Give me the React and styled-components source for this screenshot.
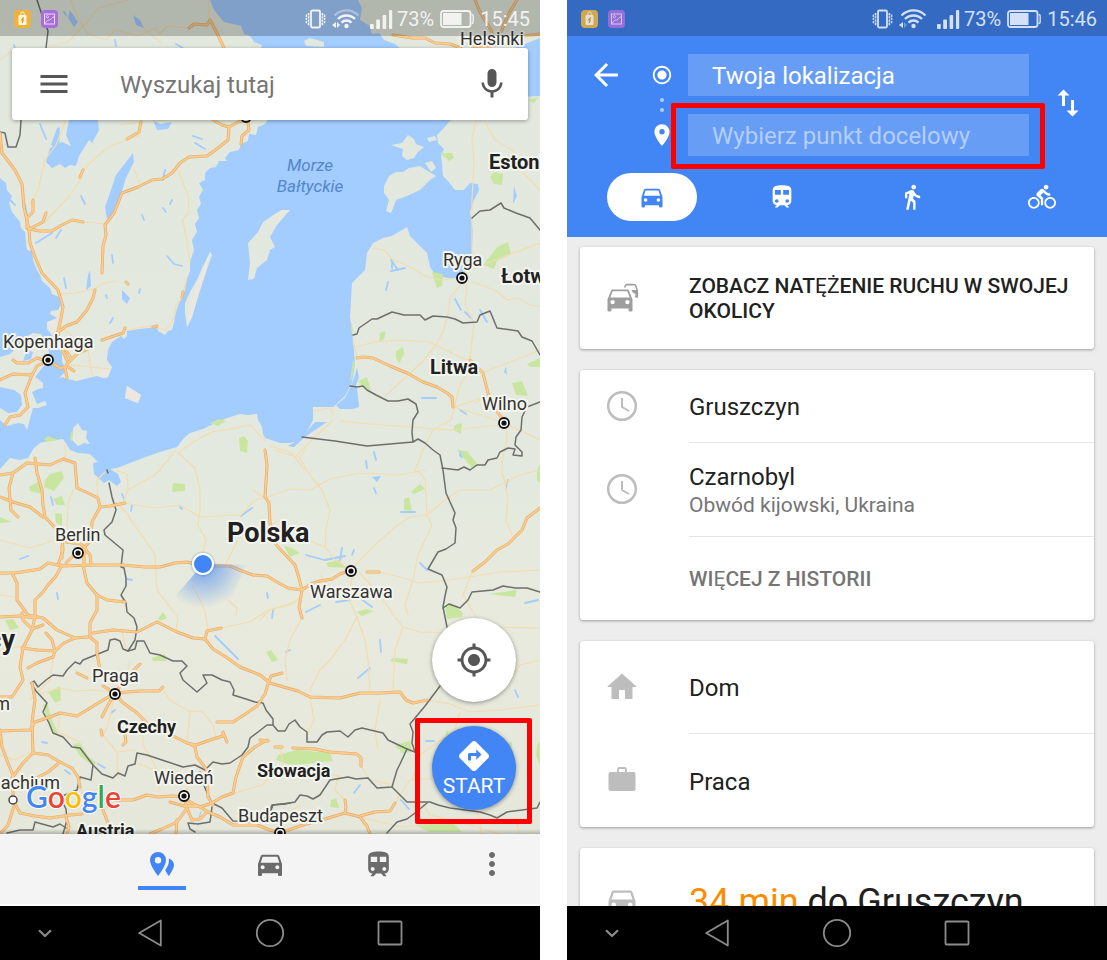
import React from "react";
import styled, { createGlobalStyle, css } from "styled-components";
import {
  MdArrowBack,
  MdDirections,
  MdDirectionsBike,
  MdDirectionsCar,
  MdDirectionsWalk,
  MdHome,
  MdMenu,
  MdMic,
  MdMoreVert,
  MdMyLocation,
  MdPlace,
  MdRadioButtonChecked,
  MdSwapVert,
  MdTrain,
} from "react-icons/md";

const GlobalStyle = createGlobalStyle`
  *, *::before, *::after { box-sizing: border-box; }
  body {
    margin: 0;
    background: #fff;
    color: #212121;
    font-family: Roboto, "Noto Sans", sans-serif;
  }
  button, input { font: inherit; color: inherit; }
  ul { list-style: none; margin: 0; padding: 0; }
  svg { display: block; }
`;

const blue = "#4285f4";

const Page = styled.main`
  display: grid;
  grid-template-columns: minmax(0, 1fr) minmax(0, 1fr);
  gap: 27px;
  height: 100vh;
  min-height: 640px;
`;

const Phone = styled.section`
  display: flex;
  flex-direction: column;
  min-height: 0;
  overflow: hidden;
`;

const PlainButton = styled.button`
  display: flex;
  align-items: center;
  justify-content: center;
  padding: 0;
  border: 0;
  background: none;
  cursor: pointer;
`;

/* ---------- status bar ---------- */

const StatusRow = styled.div`
  position: relative;
  display: flex;
  flex: none;
  align-items: center;
  height: 36px;
  padding: 2px 10px 0 14px;
  background: ${(p) => (p.$over ? "rgba(0, 0, 0, 0.21)" : "#356ac3")};
  color: ${(p) => (p.$over ? "#f2f2f0" : "#d3e0f5")};
  font-size: 20px;
  line-height: 24px;
`;

const Notices = styled.div`
  display: flex;
  gap: 10px;
  margin-right: auto;
  opacity: ${(p) => (p.$faded ? 0.85 : 1)};
`;

const Signals = styled.div`
  display: flex;
  align-items: center;
  gap: 6px;
`;

const Group = styled.div`
  display: flex;
  align-items: center;
  gap: 4px;
  margin-left: 5px;
`;

function StatusBar({ time, over }) {
  return (
    <StatusRow $over={over}>
      <Notices $faded={!over}>
        <svg width="17" height="18" viewBox="0 0 17 18" aria-hidden="true">
          <rect width="17" height="18" rx="4" fill="#edb33c" />
          <rect x="4.5" y="5" width="8" height="10" rx="1" fill="#fff6dc" />
          <path d="M6.8 5.5V3.6a1.7 1.7 0 0 1 3.4 0v1.9" fill="none" stroke="#fff6dc" strokeWidth="1" />
          <path d="M9.8 7.5L7.6 10h1.6l-1 3" fill="none" stroke="#d99a1c" strokeWidth="1.2" />
        </svg>
        <svg width="17" height="18" viewBox="0 0 17 18" aria-hidden="true">
          <rect width="17" height="18" rx="4" fill="#a86fdc" />
          <rect x="3.5" y="4" width="10" height="10" fill="none" stroke="#ecd9fb" strokeWidth="1" />
          <circle cx="6.4" cy="6.8" r="1.2" fill="none" stroke="#ecd9fb" strokeWidth="0.8" />
          <path d="M4 13.5c2-3 3-3.5 4.5-3.5S11 7 13.5 6.5" fill="none" stroke="#ecd9fb" strokeWidth="1" />
        </svg>
      </Notices>
      <Signals>
        <svg width="21" height="20" viewBox="0 0 21 20" fill="none" stroke="currentColor" aria-hidden="true">
          <rect x="6" y="1.5" width="9" height="17" rx="1.2" strokeWidth="1.8" />
          <path d="M3.6 4v13M17.4 4v13" strokeWidth="1.6" strokeDasharray="2.4 0.8" />
          <path d="M1.4 5.5v9.500M19.600 5.500v9.500" strokeWidth="1.4" strokeDasharray="2.4 0.8" />
        </svg>
        <svg width="27" height="20" viewBox="0 0 27 20" fill="none" stroke="currentColor" aria-hidden="true">
          <path d="M2.500 6.500a16.500 16.500 0 0 1 24 0" strokeWidth="2.200" opacity={over ? 0.4 : 1} />
          <path d="M6 10a12 12 0 0 1 17 0" strokeWidth="2.400" />
          <path d="M9.500 13.600a7 7 0 0 1 10 0" strokeWidth="2.400" />
          <circle cx="14.500" cy="17" r="2.200" fill="currentColor" stroke="none" />
          <path d="M4 13v6l-4-3z" fill="currentColor" stroke="none" />
          <path d="M5 13v6l3-3z" fill="currentColor" stroke="none" opacity={over ? 1 : 0.4} />
        </svg>
        <Group>
          <svg width="23" height="19" viewBox="0 0 23 19" fill="currentColor" aria-hidden="true">
            <rect x="0" y="14" width="3.800" height="5" rx="1" />
            <rect x="6.200" y="9.500" width="3.800" height="9.500" rx="1" />
            <rect x="12.600" y="5" width="3.600" height="14" rx="1" />
            <rect x="19" y="0" width="3.200" height="19" rx="1" />
          </svg>
          <span>73%</span>
        </Group>
        <svg width="34" height="18" viewBox="0 0 34 18" aria-hidden="true">
          <rect x="1" y="1" width="29.500" height="16" rx="2.500" fill="none" stroke="currentColor" strokeWidth="1.800" />
          <rect x="3" y="3" width="18.500" height="12" fill="currentColor" />
          <path d="M31.500 4.500c1.400 0 1.700.6 1.700 1.500v6c0 .9-.3 1.500-1.700 1.500" fill="none" stroke="currentColor" strokeWidth="1.400" />
        </svg>
        <span>{time}</span>
      </Signals>
    </StatusRow>
  );
}

/* ---------- system navigation ---------- */

const SystemNav = styled.nav`
  position: relative;
  display: grid;
  flex: none;
  grid-template-columns: 3fr 4fr 4fr 4fr 3fr;
  height: 54px;
  background: #000;
  color: #8c8c8c;
`;

function NavBar() {
  const line = { fill: "none", stroke: "currentColor", strokeWidth: 1.8, strokeLinejoin: "round" };
  return (
    <SystemNav aria-label="System">
      <PlainButton aria-label="Ukryj">
        <svg width="14" height="9" viewBox="0 0 14 9" {...line} strokeWidth="2.200">
          <path d="M1 1.200L7 7l6-5.800" />
        </svg>
      </PlainButton>
      <PlainButton aria-label="Wstecz">
        <svg width="24" height="28" viewBox="0 0 24 28" {...line}>
          <path d="M22.800 1.500v25L1.200 14z" />
        </svg>
      </PlainButton>
      <PlainButton aria-label="Ekran główny">
        <svg width="30" height="30" viewBox="0 0 30 30" {...line}>
          <circle cx="15" cy="15" r="13.200" />
        </svg>
      </PlainButton>
      <PlainButton aria-label="Ostatnie">
        <svg width="26" height="26" viewBox="0 0 26 26" {...line}>
          <rect x="1.500" y="1.500" width="23" height="23" rx="1" />
        </svg>
      </PlainButton>
    </SystemNav>
  );
}

/* ---------- map drawing ---------- */

const LAND = [
  // Sweden
  "0,0 210,0 214,10 224,22 233,24 241,26 244,34 250,36 254,42 262,45 258,60 262,80 270,100 258,112 268,120 265,124 258,127 256,135 249,134 248,141 241,144 239,150 230,152 225,158 227,161 219,161 216,167 210,168 205,173 205,180 199,183 203,190 199,197 201,204 197,210 199,218 195,224 197,232 192,240 194,250 190,262 190,271 186,281 185,291 180,300 176,312 174,322 172,330 168,331 165,335 158,331 157,327 140,329 127,331 127,336 124,339 121,336 112,342 108,350 107,360 112,367 108,377 103,378 97,376 88,378 77,381 66,379 63,377 59,378 64,373 65,367 62,362 62,353 55,343 54,338 47,329 47,322 52,324 56,322 57,318 50,314 51,311 58,310 61,305 59,297 52,294 50,288 42,281 40,275 37,270 33,260 32,251 27,250 26,243 25,232 21,228 20,222 12,212 9,203 12,196 7,190 6,183 0,178",
  // Zealand
  "0,357 10,354 17,347 23,343 27,336 33,333 41,334 46,343 49,352 48,361 43,367 35,377 38,379 43,383 43,388 38,389 32,392 37,404 45,401 47,405 38,408 33,408 27,430 24,424 18,423 7,426 0,420 0,408 8,413 17,412 22,405 21,395 14,390 0,387",
  // continent
  "0,469 10,458 20,460 28,458 34,448 40,443 48,441 63,439 67,445 70,450 78,453 90,454 97,461 104,467 110,469 117,468 143,458 160,452 177,447 184,438 190,433 203,429 217,422 227,418 240,414 248,415 257,414 258,420 262,427 263,434 265,438 280,443 290,443 301,440 307,433 309,428 313,420 313,407 333,407 345,396 352,383 354,370 355,363 353,340 350,317 352,283 357,278 365,270 367,253 373,243 383,238 392,236 407,227 410,236 418,244 427,253 430,267 434,273 443,277 453,279 460,277 468,270 472,263 472,248 473,231 470,212 474,200 479,190 478,184 470,183 464,190 455,190 448,181 443,176 442,163 441,156 444,149 438,143 437,135 444,128 449,122 470,100 500,98 540,96 540,834 0,834",
  // Finland
  "358,0 362,8 360,20 370,26 372,34 379,33 384,40 395,44 402,50 430,56 470,55 500,52 514,48 530,42 540,38 540,0",
  // Gotland, Oland, Bornholm, Rügen
  "290,210 282,210 272,216 263,222 258,232 248,243 250,263 248,280 254,279 257,268 267,260 270,250 275,247 270,237 277,225",
  "210,252 212,255 206,272 200,287 197,300 192,317 187,327 185,313 185,303 191,290 197,280 203,266",
  "127,386 141,395 138,403 125,398",
  "73,428 78,423 82,430 87,431 86,438 90,444 84,443 78,446 72,440",
  // Saaremaa, Hiiumaa and neighbours
  "384,186 389,176 396,172 403,172 409,168 420,166 426,170 436,176 430,180 420,190 407,196 396,200 393,208 391,213 386,211 389,200 384,193",
  "391,145 402,143 408,135 414,139 416,144 424,147 418,152 414,158 407,160 402,156 403,149",
  "425,163 432,161 436,168 431,172",
  "427,138 435,136 437,140 429,142",
  "304,41 310,38 317,40 324,42 324,47 306,46",
];

const PALE = [
  "290,210 282,210 272,216 277,222",
  "210,252 206,272 197,300 192,317 187,327 190,306 198,282",
  "127,386 141,395 138,403 125,398",
  "47,322 57,318 56,333 49,329",
  "97,376 104,368 112,367 107,378",
];

const WATER = [
  // Vänern and Vättern
  "69,120 98,120 99,130 92,143 89,140 79,156 76,166 70,165 65,168 60,164 52,168 46,162 50,148 62,142 71,146 66,135",
  "133,153 134,162 126,178 121,194 114,212 107,219 105,207 109,196 116,175 123,166",
  // lagoons
  "93,463 101,461 107,467 118,474 121,482 117,486 109,480 104,483 94,474",
  "352,384 357,388 359,407 353,409 340,409 336,405 345,398",
  "303,437 309,429 315,422 327,422 318,428 306,436 294,447 288,446",
  "352,384 357,368 359,377 355,388",
  "51,145 57,128 60,127 59,150",
  "153,120 160,124 172,122 168,129 157,130",
  "133,15 140,20 144,28 136,25",
  "70,10 78,22 74,27 68,18",
  "90,270 91,286 86,290 88,275",
  "122,290 130,298 127,304 122,299",
  "372,477 381,476 377,482",
  "196,832 200,812 202,811 199,820",
  "27,350 33,352 31,359 23,361",
  "504,372 506,366 507,375",
  "514,186 517,196 513,204",
  "460,450 463,459 459,456",
];

const BROOKS = [
  "14,45 16,52", "25,60 28,66", "40,124 46,139", "81,196 85,204", "142,215 144,220", "165,170 163,180",
  "163,208 166,212", "172,200 170,204", "193,136 202,139", "195,143 205,149", "115,40 116,46", "64,12 66,15",
  "167,256 174,264 182,266", "112,255 113,263", "64,278 66,288", "110,323 113,318", "140,289 139,293",
  "106,295 107,298", "36,243 52,233", "56,238 61,230", "176,44 183,48", "10,200 15,205", "25,205 27,215",
  "391,260 398,270", "392,263 392,268", "386,290 388,282", "391,271 405,268", "455,299 461,310", "465,312 471,318",
  "422,398 436,398", "460,410 466,414", "374,452 376,460", "132,505 131,511", "122,494 124,499", "180,507 182,509",
  "241,516 252,508", "267,593 268,598", "57,593 58,599", "20,559 28,556", "51,497 53,505", "127,579 132,580",
  "215,636 238,659", "272,618 273,610", "306,555 324,560", "325,560 345,556", "354,550 352,555", "306,612 320,605",
  "336,602 350,600", "360,598 372,607", "380,640 381,652", "358,678 370,668", "401,512 415,512", "508,480 506,488",
  "538,600 525,603", "515,690 518,697", "286,652 290,650", "426,741 434,741", "401,800 409,809", "354,793 360,785",
  "340,560 342,548", "420,563 427,570", "98,764 105,768", "65,770 70,774", "42,742 47,743", "111,713 115,710",
  "202,570 204,576", "366,461 367,468", "374,488 376,493", "480,310 487,322",
];

const PARKS = [
  "45,480 50,474 62,471 64,478 54,491 44,487", "29,487 38,482 44,492 38,493 30,491",
  "53,499 62,496 65,505 57,505", "55,513 62,514 62,526 56,523", "0,517 12,522 0,523",
  "173,483 185,484 185,491 172,492", "239,438 244,436 248,441 247,453 240,451", "210,423 219,419 226,421 218,426",
  "71,431 73,434 72,441 70,440", "44,439 48,436 58,440 47,442", "158,619 163,612 167,618 160,621",
  "266,652 271,650 278,660 272,662", "152,658 165,654 166,661 153,661", "48,692 60,686 61,700 55,703",
  "43,705 47,703 53,722 58,733 54,735 48,722", "73,744 80,743 88,756 97,763 92,765 80,756", "5,620 13,619 19,628 10,630",
  "326,563 339,560 347,568 328,567", "284,546 290,547 300,553 290,557", "357,612 366,609 374,611 362,616",
  "404,499 409,497 412,511 404,510", "411,492 420,484 425,489 414,494", "445,605 451,603 463,613 462,617 447,619",
  "489,594 517,590 515,597", "457,450 467,451 478,465 472,468", "393,658 408,659 407,664 390,661",
  "278,755 297,750 330,753 333,761 305,764 290,765 276,760", "395,745 410,741 412,752 402,753",
  "512,383 522,381 528,396 516,395", "455,425 462,423 461,434 453,430", "380,333 386,331 384,339 379,342",
  "396,351 403,347 404,354 399,364 396,358", "483,265 497,247 508,242 511,254 497,261 494,269", "432,272 443,274 442,286 437,288",
  "358,381 367,377 371,391 361,385", "353,360 355,362 352,378 350,382", "527,364 540,358 540,367 530,367",
  "440,153 452,153 454,158 449,161 445,157", "490,177 494,172 503,174 502,185 494,184", "351,321 354,334 351,331",
  "331,800 336,798 339,808 330,807", "500,745 512,742 511,760 505,757", "415,825 450,820 462,832 430,832", "528,100 539,97 534,103",
  "447,730 456,742 442,745", "537,745 540,742 540,765 536,755", "537,470 540,464 540,483 537,480",
];

const HIGHWAYS = [
  "0,133 2,153 15,170 22,184 24,207 29,230 30,243 35,257 42,273 58,290 63,307 61,318 58,332 60,345 68,362 65,368 67,378",
  "29,229 40,231 52,231 62,225 72,220 83,222",
  "213,120 222,125 229,127 238,122 246,120",
  "229,127 228,140 218,148 207,156 189,157 180,163 172,173 162,179 152,180 138,187 122,193 114,213 105,225 106,235 103,246 102,273",
  "248,122 249,130 242,136 241,144",
  "141,122 139,132 127,139",
  "33,200 33,212 27,218 27,228",
  "46,213 43,222 29,229",
  "189,28 194,24 207,25 210,20 217,33 224,48",
  "95,290 93,298 87,310 77,322 66,326 57,333",
  "393,35 412,38 425,38 435,43 450,44 461,48",
  "475,0 480,12 491,30 496,45", "517,0 508,15 501,32 496,45", "524,36 540,34", "472,46 490,48",
  "102,340 108,338 123,333 125,328", "153,327 157,326", "126,282 128,284", "80,177 83,170", "182,297 183,292",
  "67,364 78,353 90,348", "62,345 71,358", "68,367 74,371",
  "0,380 13,374 32,375 37,366 47,361", "32,375 25,393 28,407 20,415 10,417 5,425", "13,360 17,363 28,363 37,358 46,361", "52,363 60,368 66,367",
  "357,358 363,357 373,358 390,366 407,373 423,382 437,387 447,393 452,397 453,407",
  "470,360 483,373 488,393 492,404 503,420",
  "0,475 13,473 27,463 50,465 63,459 75,463 77,488 88,493 98,498 100,507 110,506 125,503",
  "100,507 92,522 91,540 84,548", "35,458 37,473 42,490 43,505 45,517 62,535 63,550 58,565",
  "0,497 13,502 30,507 43,517", "13,473 9,488 11,510 18,517",
  "66,542 81,544 90,555 91,564", "62,546 62,558", "84,550 84,566", "66,563 77,552",
  "0,573 15,573 40,569 48,563 63,566 93,565 123,565 145,567 160,567 175,563 187,562 203,566 230,566 242,571 253,575 267,576 277,582 288,588 302,590 311,584 320,581 332,579 340,574 351,570",
  "367,572 379,572",
  "265,450 267,465 265,497 269,503 270,523 272,538 278,547 295,565 299,578 302,590 299,607 302,618",
  "62,565 56,576 48,585 43,592 35,600 35,617 32,630 23,648 20,667 23,680 12,697 0,697",
  "83,565 87,583 97,595 107,600 125,602", "97,594 97,610 90,623 90,637 97,643 97,653 100,670",
  "12,573 17,583 17,600 28,615 43,618 57,630 75,638 88,637", "0,617 20,616 35,618",
  "22,613 23,620 32,629 43,625", "93,633 113,630 137,632 157,622 177,632 193,638 205,639 213,649 226,657 240,667 260,675 270,683 287,688 298,691 310,697 340,698 360,693 380,693 400,692 406,700 413,703 427,700",
  "205,639 207,631 221,628", "217,722 233,722 247,713 257,706 265,694 268,684 271,676 282,673",
  "22,648 37,650 55,651 64,643 75,638", "46,633 52,640 55,651 53,657 37,663 28,668",
  "115,693 100,702 77,716 60,713 50,717 35,722 30,730 0,731", "115,693 140,691 159,691 163,687", "115,693 127,677 140,664", "115,693 103,686", "115,693 108,705 102,717",
  "115,693 122,702 137,713 147,723 165,732 187,743 196,745 213,739 223,736 223,732 227,742",
  "190,744 195,747 197,757 207,770 208,797 213,805", "77,673 87,678", "101,730 102,735", "125,735 126,742 123,745",
  "32,683 35,700 32,722 33,753 23,763 12,778 11,788", "0,730 2,747 8,763 13,775 13,800 20,813 35,816 50,818 70,815 82,814",
  "33,753 48,755 60,762 72,768 78,777 80,787", "60,762 48,772 35,779 25,783", "66,817 69,827 67,834", "14,806 8,825 0,834",
  "117,800 133,800 147,795 158,797 173,796 183,797 192,803 200,807 208,812 220,817 233,825 257,825 270,830 280,833",
  "184,797 187,808 180,818 175,823 162,829 150,834", "200,807 212,803 222,797 233,793 236,777 243,757 255,747 267,740",
  "170,802 184,806 198,806", "187,808 192,820 200,819 207,812", "103,810 108,823 110,834", "177,820 176,834",
  "275,747 282,747", "293,748 315,749 330,752 357,754 361,758 361,766", "260,740 268,741",
  "280,833 303,825 325,819 345,813 360,817 367,826 370,834", "345,813 346,807 345,800", "360,816 375,812 390,811 395,803",
  "540,508 527,518 522,530 517,535 508,544 497,550 485,562 473,571",
];

const ROADS = [
  "71,0 78,18 88,34 106,40 115,30 139,36 155,28 160,34 167,26 189,28", "145,30 161,43", "208,0 210,20", "129,0 98,8 88,21 68,42 50,46",
  "0,60 12,51", "66,120 56,145 45,160 38,190 30,205", "141,135 110,146 95,158 83,170 80,180 70,195 45,222",
  "172,120 140,122 120,125", "134,170 140,183", "178,170 188,195 189,212 182,220 186,235 190,262", "83,222 105,224",
  "60,294 75,293 95,289 102,284 116,281", "126,330 150,326 166,330 174,318 176,305 182,298 187,278", "60,325 75,340 88,350 92,375", "70,365 110,369",
  "476,120 472,140 474,160 472,200 472,263", "485,122 495,140 512,150 520,170 540,190",
  "373,248 384,250 393,260 410,267 425,276 443,280 458,278 468,271 500,258 540,243", "472,282 495,290 507,300 518,298 530,305 540,306",
  "460,285 450,298 449,308 444,330 436,345 423,361 405,378 385,396", "355,347 375,342 400,340 430,342 445,350 463,358 470,361", "467,284 465,305 474,323 472,340 470,358",
  "472,365 460,385 455,405 451,420 433,430 425,445 415,470", "484,372 510,362 540,350", "455,407 490,395 475,403", "453,407 480,415 504,423 540,440", "506,425 507,440 502,460 502,475 508,485",
  "340,421 370,424 410,427 450,430 500,425", "332,421 315,437 296,456", "270,446 290,452 305,470", "314,411 330,408 334,415", "353,340 357,358",
  "117,470 127,474 128,490 123,503 155,508 180,505 200,517 240,515", "119,505 128,515 132,522 144,538 155,555 156,577 157,590 167,603 178,618 176,630", "176,450 168,460 155,475 128,490",
  "178,453 195,468 200,490 200,510 198,525 206,540 200,562", "178,453 195,441 212,432 225,430 250,425 265,440", "240,516 255,500 265,498 290,489 310,490 330,479 360,473 400,475 425,470",
  "275,450 300,458 312,478 322,490 330,510 326,530 325,547", "300,457 305,450", "418,470 425,480 427,515 432,525 418,555 413,580 405,605 408,615",
  "353,567 375,545 395,527 410,517 427,515 445,500 460,490 490,490 520,475 540,470", "379,572 400,577 420,583 450,580 500,572 540,570", "300,537 325,547 335,560 348,568", "262,530 280,520",
  "503,475 508,500 506,520 512,535", "472,572 463,595 478,620 480,640", "238,540 225,565 210,562", "192,585 200,600 205,612 208,630", "221,628 250,622 268,610 290,605 300,598",
  "302,618 290,640 285,660 287,680", "260,620 270,610 295,602", "340,600 320,575", "353,575 348,598 357,617 345,640 330,660 320,670 310,690", "357,617 365,640 368,660 370,690",
  "360,573 380,595 395,617 403,627 420,632 445,633", "403,627 395,650 393,690", "310,697 314,720 307,735", "380,700 375,730 378,750",
  "427,700 450,704 470,712 500,710 540,705", "440,686 470,700 500,690 520,665 540,660", "480,627 540,628", "460,712 455,730 420,755 412,780",
  "163,690 170,700 190,712 187,743", "190,711 203,712 213,725 216,738", "125,678 130,663", "115,693 95,690 75,691 60,688 40,694", "115,693 108,725 103,735 117,752 118,778",
  "143,723 143,745 155,765 160,790", "117,752 135,750", "137,763 155,770 180,772", "183,796 195,775 205,770", "60,713 58,732 80,742", "30,645 0,650", "54,652 50,680 30,700",
  "0,595 15,597", "67,533 68,504 73,490", "122,630 125,645 128,650", "0,755 15,760 30,752", "80,787 85,800 103,810", "103,810 117,800",
  "280,745 283,765 262,785 235,793", "282,765 305,770 340,776", "361,766 370,780 395,785", "345,800 335,790 338,776", "395,803 410,780 440,778", "282,833 285,815 300,805", "420,800 430,815 470,825 500,834", "475,800 482,834", "360,817 400,827 430,825", "515,818 520,834",
  "60,464 66,455 65,445", "98,500 97,480 105,472", "228,600 237,608 236,615", "0,540 30,548 55,540", "253,490 268,500",
];

const BORDERS = [
  "37,0 43,18 48,31 46,48", "21,120 20,135 16,147 8,147 5,133 0,132",
  "107,470 108,473", "109,483 112,497 116,510 112,522 104,530 105,535 123,550 121,567 124,568 126,578 126,586 121,595 126,603 127,612 134,618 137,627 135,640 128,651 123,649 120,641 115,639 110,640 108,650 98,654 83,660 80,664 75,662 67,670 63,676 53,675 46,680 38,687 34,681 31,683 36,691 47,703 43,712 49,723 53,733 63,737 72,747 80,748 93,765 102,774 113,778 118,773 125,776 128,766 135,764 137,753 147,755 165,761 183,767 195,765 205,770 213,762 222,764 230,763 242,755 248,747 250,738 258,732 267,725 273,725 278,731 285,731 289,724 295,720 300,727 307,732 307,742 317,742 322,735 327,732 340,731 348,737 355,730 362,728 383,733 388,740 407,749 415,752",
  "128,651 135,649 137,641 144,641 150,653 160,655 173,661 182,661 187,666 180,673 183,680 197,692 207,683 203,675 212,675 222,680 230,682 234,690 233,695 246,699 255,702 263,703 266,710 273,719 273,725",
  "440,686 425,706 410,724 413,732 412,743 415,752",
  "447,627 443,607 445,596 447,587 442,575 428,569 438,552 446,549 455,543 456,528 453,520 455,513 446,493 443,470 440,455 433,450 425,443 418,439 413,442 412,432 413,420 418,412 416,404 408,399 398,401 388,401 376,395 367,390 363,386 357,387 350,386",
  "302,437 335,441 367,446 413,442",
  "353,335 357,334 359,328 372,319 377,319 392,312 404,315 420,315 425,320 433,316 447,317 455,319 463,323 477,322 480,315 490,311 497,328 518,331 522,337 532,341 540,355",
  "472,218 480,211 490,210 501,203 504,208 516,213 530,218 540,230",
  "540,402 527,407 522,417 521,430 516,437 515,445 522,452 522,456 513,455 515,449 508,448 500,452 497,458 488,460 485,465 477,465 470,470 464,467 458,470 442,468",
  "443,608 449,604 460,608 468,600 472,592 493,590 503,586 515,588 527,588 540,592",
  "270,813 273,805 285,804 295,802 300,795 307,796 313,799 320,795 330,780 348,777 356,779 368,778 377,788 392,787 397,770 400,764 407,749",
  "392,787 400,795 407,802 430,802 438,805 450,808 465,810 480,812 490,815 497,818 507,812 522,810 537,808 540,802",
  "387,833 397,822 407,819 415,813 427,803",
  "200,772 203,783 208,795 212,803 222,808 233,821 260,822 268,815 272,805 290,803", "212,807 210,822 198,824 188,823 190,829 195,832",
  "93,765 91,780 80,777 77,790 60,797 66,809 67,820 63,834", "7,833 20,830 33,830 35,822 53,827 60,824 66,828",
];

const MARKERS = [
  [48, 360], [246, 117], [462, 278], [504, 423], [78, 553], [351, 571], [115, 694], [184, 796], [280, 833],
];

const PLACES = [
  { name: "Helsinki", x: 460, y: 45 },
  { name: "Ryga", x: 443, y: 266 },
  { name: "Kopenhaga", x: 3, y: 348 },
  { name: "Wilno", x: 482, y: 410 },
  { name: "Berlin", x: 55, y: 541 },
  { name: "Warszawa", x: 310, y: 598 },
  { name: "Praga", x: 92, y: 682 },
  { name: "Wiedeń", x: 154, y: 784 },
  { name: "Budapeszt", x: 238, y: 822 },
  { name: "Monachium", x: 60, y: 789, end: true },
  { name: "m", x: 10, y: 710, end: true },
];

const COUNTRIES = [
  { name: "Estonia", x: 489, y: 169, size: 20 },
  { name: "Łotwa", x: 501, y: 283, size: 20 },
  { name: "Litwa", x: 430, y: 374, size: 20 },
  { name: "Polska", x: 227, y: 542, size: 27 },
  { name: "Niemcy", x: 15, y: 649, size: 27, end: true },
  { name: "Czechy", x: 117, y: 733, size: 18 },
  { name: "Słowacja", x: 257, y: 777, size: 18 },
  { name: "Austria", x: 76, y: 837, size: 18 },
];

const MapSvg = styled.svg`
  position: absolute;
  inset: 0;
  width: 100%;
  height: 100%;
`;

const MapLabel = styled.text`
  font-family: Roboto, "Noto Sans", sans-serif;
  font-size: 18px;
  fill: #333;
  stroke: #f3f5ee;
  stroke-width: 4px;
  stroke-linejoin: round;
  paint-order: stroke;
  ${(p) =>
    p.$country &&
    css`
      font-size: ${p.$country}px;
      font-weight: 700;
      fill: #212121;
    `}
  ${(p) =>
    p.$sea &&
    css`
      font-size: 17px;
      font-style: italic;
      fill: #5387cb;
      stroke: none;
      text-anchor: middle;
    `}
  ${(p) =>
    p.$logo &&
    css`
      font-family: Lato, Roboto, sans-serif;
      font-size: 30px;
      font-weight: 600;
      stroke: #fff;
      stroke-width: 2px;
    `}
`;

function Lines({ points, color, width }) {
  return (
    <g fill="none" stroke={color} strokeWidth={width} strokeLinejoin="round" strokeLinecap="round">
      {points.map((p) => (
        <polyline key={p} points={p} />
      ))}
    </g>
  );
}

function Areas({ points, color }) {
  return (
    <g fill={color}>
      {points.map((p) => (
        <polygon key={p} points={p} />
      ))}
    </g>
  );
}

function MapDrawing() {
  return (
    <MapSvg viewBox="0 0 540 834" preserveAspectRatio="xMidYMid slice" role="img" aria-label="Mapa">
      <defs>
        <linearGradient id="land" x1="0" y1="0" x2="0" y2="834" gradientUnits="userSpaceOnUse">
          <stop offset="0" stopColor="#e2e8dd" />
          <stop offset="0.56" stopColor="#e3e9df" />
          <stop offset="0.72" stopColor="#e7eadd" />
          <stop offset="1" stopColor="#e4e7da" />
        </linearGradient>
        <radialGradient id="beam" cx="203" cy="564" r="44" gradientUnits="userSpaceOnUse">
          <stop offset="0" stopColor={blue} stopOpacity="0.75" />
          <stop offset="0.45" stopColor={blue} stopOpacity="0.4" />
          <stop offset="1" stopColor={blue} stopOpacity="0" />
        </radialGradient>
      </defs>
      <rect width="540" height="834" fill="#a3ccff" />
      <Areas points={LAND} color="url(#land)" />
      <Areas points={PALE} color="#ece8df" />
      <Areas points={PARKS} color="#c9e6a1" />
      <Areas points={WATER} color="#a3ccff" />
      <Lines points={BROOKS} color="#a3ccff" width="1.8" />
      <Lines points={ROADS} color="#f3dcae" width="1.2" />
      <Lines points={BORDERS} color="#6d6f6c" width="1.5" />
      <Lines points={HIGHWAYS} color="#e5aa68" width="3" />
      <Lines points={HIGHWAYS} color="#fdcb8a" width="1.8" />
      <path d="M203 564L172 600Q203 628 232 598L246 565Z" fill="url(#beam)" />
      <circle cx="203" cy="564" r="12.5" fill="#3d6fc0" opacity="0.2" />
      <circle cx="203" cy="564" r="10" fill={blue} stroke="#fff" strokeWidth="2" />
      {MARKERS.map(([x, y]) => (
        <g key={`${x}-${y}`} transform={`translate(${x} ${y})`}>
          <circle r="5" fill="#fff" stroke="#111" strokeWidth="1.8" />
          <circle r="2.6" fill="#111" />
        </g>
      ))}
      <circle cx="13" cy="800" r="4" fill="#fff" stroke="#444" strokeWidth="1.5" />
      <MapLabel $sea x="310" y="171">Morze</MapLabel>
      <MapLabel $sea x="310" y="192">Bałtyckie</MapLabel>
      {PLACES.map((p) => (
        <MapLabel key={p.name} x={p.x} y={p.y} textAnchor={p.end ? "end" : "start"}>
          {p.name}
        </MapLabel>
      ))}
      {COUNTRIES.map((c) => (
        <MapLabel key={c.name} $country={c.size} x={c.x} y={c.y} textAnchor={c.end ? "end" : "start"}>
          {c.name}
        </MapLabel>
      ))}
      <MapLabel $logo x="26" y="808">
        <tspan fill="#4285f4">G</tspan>
        <tspan fill="#ea4335">o</tspan>
        <tspan fill="#fbbc05">o</tspan>
        <tspan fill="#4285f4">g</tspan>
        <tspan fill="#34a853">l</tspan>
        <tspan fill="#ea4335">e</tspan>
      </MapLabel>
    </MapSvg>
  );
}

/* ---------- map screen ---------- */

const MapArea = styled.div`
  position: relative;
  flex: 1;
  min-height: 0;
  overflow: hidden;
  background: #a3ccff;

  &::after {
    content: "";
    position: absolute;
    inset: auto 0 0;
    height: 5px;
    background: linear-gradient(rgba(0, 0, 0, 0), rgba(0, 0, 0, 0.22));
  }
`;

const SearchBox = styled.form`
  position: relative;
  display: flex;
  align-items: center;
  height: 72px;
  margin: 12px 12px 0;
  padding: 0 18px 0 24px;
  border-radius: 3px;
  background: #fff;
  box-shadow: 0 1px 4px rgba(0, 0, 0, 0.35);
  color: #565656;
`;

const SearchInput = styled.input`
  flex: 1;
  min-width: 0;
  margin: 0 24px 0 48px;
  padding: 2px 0 0;
  border: 0;
  outline: 0;
  background: none;
  font-size: 24px;
  line-height: 32px;

  &::placeholder {
    color: #757575;
    opacity: 1;
  }
`;

const FabColumn = styled.div`
  position: absolute;
  right: 24px;
  bottom: 24px;
  z-index: 1;
  display: flex;
  flex-direction: column;
  gap: 24px;
`;

const Fab = styled(PlainButton)`
  position: relative;
  flex-direction: column;
  width: 84px;
  height: 84px;
  border-radius: 50%;
  background: ${(p) => (p.$primary ? blue : "#fff")};
  color: ${(p) => (p.$primary ? "#fff" : "#565656")};
  box-shadow: 0 1px 4px rgba(0, 0, 0, 0.4);
  font-size: 21px;
  line-height: 24px;
`;

const Marked = styled.div`
  position: relative;

  &::after {
    content: "";
    position: absolute;
    inset: ${(p) => p.$inset};
    border: 5px solid #f00;
    border-radius: 2px;
    pointer-events: none;
  }
`;

const TabBar = styled.nav`
  display: grid;
  flex: none;
  grid-template-columns: repeat(5, 1fr);
  height: 72px;
  border-bottom: 2px solid #fff;
  background: #f4f4f4;
`;

const Tab = styled(PlainButton)`
  position: relative;
  padding-bottom: 10px;
  color: ${(p) => (p.$active ? blue : "#6b6b6b")};

  &:first-child {
    grid-column: 2;
  }

  &:last-child {
    padding-left: 12px;
  }

  ${(p) =>
    p.$active &&
    css`
      &::after {
        content: "";
        position: absolute;
        bottom: 14px;
        left: calc(50% - 24px);
        width: 48px;
        height: 4px;
        background: ${blue};
      }
    `}
`;

function MapScreen() {
  return (
    <Phone aria-label="Mapa">
      <MapArea>
        <MapDrawing />
        <StatusBar time="15:45" over />
        <SearchBox role="search" onSubmit={(e) => e.preventDefault()}>
          <PlainButton type="button" aria-label="Menu">
            <MdMenu size={36} />
          </PlainButton>
          <SearchInput type="text" placeholder="Wyszukaj tutaj" aria-label="Wyszukaj tutaj" />
          <PlainButton type="button" aria-label="Wyszukiwanie głosowe">
            <MdMic size={36} />
          </PlainButton>
        </SearchBox>
        <FabColumn>
          <Fab aria-label="Moja lokalizacja">
            <MdMyLocation size={36} />
          </Fab>
          <Marked $inset="-8px -16px -14px -17px">
            <Fab $primary>
              <MdDirections size={36} />
              START
            </Fab>
          </Marked>
        </FabColumn>
      </MapArea>
      <TabBar aria-label="Widoki">
        <Tab $active aria-label="Odkrywaj">
          <svg width="26" height="26" viewBox="0 0 26 26" fill="currentColor">
            <path
              fillRule="evenodd"
              d="M9 1a8 8 0 0 0-8 8c0 6 8 16 8 16s8-10 8-16a8 8 0 0 0-8-8zm0 5a3.2 3.2 0 1 1 0 6.400A3.200 3.200 0 0 1 9 6z"
            />
            <path d="M19.800 7.500c3 1 5.200 3.300 5.200 6.500 0 3.800-5.200 11-5.200 11s-2.300-3.200-3.600-5.800c3-4.400 4.200-7.700 3.600-11.700z" />
          </svg>
        </Tab>
        <Tab aria-label="Samochód">
          <MdDirectionsCar size={32} />
        </Tab>
        <Tab aria-label="Transport publiczny">
          <MdTrain size={31} />
        </Tab>
        <Tab aria-label="Więcej">
          <MdMoreVert size={36} />
        </Tab>
      </TabBar>
      <NavBar />
    </Phone>
  );
}

/* ---------- directions screen ---------- */

const RouteHeader = styled.header`
  flex: none;
  padding-bottom: 16px;
  background: ${blue};
  color: #fff;
  box-shadow: 0 1px 2px rgba(0, 0, 0, 0.25);
`;

const RouteForm = styled.form`
  display: grid;
  grid-template-columns: 36px 18px minmax(0, 1fr) 36px;
  align-items: start;
  padding: 18px 21px 17px;
`;

const SideCell = styled.div`
  padding-top: ${(p) => p.$top}px;
`;

const Stops = styled.div`
  display: flex;
  flex-direction: column;
  align-items: center;
  width: 26px;
  margin-left: 25px;
  padding-top: 10px;
`;

const Dots = styled.div`
  display: grid;
  gap: 6px;
  padding: 12px 0 10px;
`;

const Dot = styled.span`
  width: 4px;
  height: 4px;
  border-radius: 50%;
  background: #b3cefb;
`;

const Fields = styled.div`
  display: grid;
  gap: 18px;
  margin: 0 21px 0 46px;
`;

const Field = styled.input`
  display: block;
  width: 100%;
  height: 42px;
  padding: 2px 24px 0;
  border: 0;
  border-radius: 0;
  outline: 0;
  background: #689df6;
  color: #fff;
  font-size: 24px;
  line-height: 32px;

  &::placeholder {
    color: #b3cefb;
    opacity: 1;
  }
`;

const Modes = styled.div`
  display: flex;
  justify-content: space-between;
  padding: 0 20px 0 40px;
`;

const Mode = styled(PlainButton)`
  width: 90px;
  height: 48px;
  border-radius: 24px;
  background: ${(p) => (p.$active ? "#fff" : "none")};
  color: ${(p) => (p.$active ? blue : "#fff")};
`;

const Results = styled.div`
  display: flex;
  flex: 1;
  flex-direction: column;
  gap: 21px;
  min-height: 0;
  padding: 10px 13px 21px;
  overflow: hidden;
  background: #ededed;
`;

const Card = styled.ul`
  flex: none;
  border-radius: 3px;
  background: #fff;
  box-shadow: 0 1px 3px rgba(0, 0, 0, 0.35);
`;

const Item = styled.li`
  & + & > button > span:last-child {
    border-top: 1px solid #e6e6e6;
  }
`;

const Row = styled.button`
  display: grid;
  grid-template-columns: 85px minmax(0, 1fr);
  width: 100%;
  height: ${(p) => p.$height}px;
  padding: 0 0 0 24px;
  border: 0;
  background: none;
  text-align: left;
  cursor: pointer;
`;

const RowIcon = styled.span`
  display: flex;
  align-items: center;
  color: ${(p) => (p.$dark ? "#9e9e9e" : "#bdbdbd")};
`;

const RowText = styled.span`
  display: flex;
  flex-direction: column;
  justify-content: center;
  padding: 2px 20px 0 0;
`;

const Title = styled.span`
  font-size: 24px;
  line-height: 28px;
`;

const Subtitle = styled.span`
  color: #757575;
  font-size: 21px;
  line-height: 28px;
`;

const Action = styled.span`
  color: ${(p) => (p.$muted ? "#757575" : "#212121")};
  font-size: 21px;
  font-weight: 500;
  line-height: 25px;
`;

const Thin = styled.span`
  font-weight: 400;
`;

const Trip = styled.span`
  font-size: 36px;
  line-height: 42px;
  white-space: nowrap;
`;

const Duration = styled.span`
  color: #fb8c00;
`;

function ClockIcon() {
  return (
    <svg width="36" height="36" viewBox="0 0 36 36" fill="none" stroke="currentColor" strokeWidth="2.5" aria-hidden="true">
      <circle cx="18" cy="18" r="13.8" />
      <path d="M18 10v9l7 4" strokeWidth="2" />
    </svg>
  );
}

function TrafficIcon() {
  return (
    <svg width="36" height="36" viewBox="0 0 36 36" fill="currentColor" aria-hidden="true">
      <path
        fillRule="evenodd"
        d="M25 10.800c-.3-.8-1-1.300-1.800-1.300H8.800c-.8 0-1.500.5-1.800 1.300L3.500 19.500v10.800c0 .7.500 1.200 1.200 1.200h1.600c.7 0 1.200-.5 1.200-1.200V28.500h17v1.800c0 .7.500 1.200 1.200 1.200h1.600c.7 0 1.200-.5 1.200-1.200V19.500zM8.600 24.300a2.200 2.200 0 1 1 0-4.400 2.200 2.200 0 0 1 0 4.400zm14.800 0a2.200 2.200 0 1 1 0-4.400 2.200 2.200 0 0 1 0 4.400zM6.300 17.500l2.400-6.300h14.600l2.400 6.300z"
      />
      <path
        d="M20.500 7.500l1-2c.3-.6.700-.9 1.300-.9h7.400c.7 0 1.200.3 1.400 1l1.700 5v7"
        fill="none"
        stroke="currentColor"
        strokeWidth="1.600"
      />
      <path d="M27.500 10h6.500v7.500h-2.600l-.6-1.300a1.600 1.600 0 0 0 0-2.800l-1.700-.4z" />
    </svg>
  );
}

function BriefcaseIcon() {
  return (
    <svg width="36" height="36" viewBox="0 0 36 36" aria-hidden="true">
      <rect x="4.5" y="10" width="27" height="19" rx="2" fill="currentColor" />
      <path d="M14 11V7.500a1.500 1.500 0 0 1 1.500-1.500h5a1.500 1.500 0 0 1 1.500 1.500V11" fill="none" stroke="currentColor" strokeWidth="1.800" />
    </svg>
  );
}

function ResultRow({ icon, height, dark, children }) {
  return (
    <Item>
      <Row $height={height}>
        <RowIcon $dark={dark}>{icon}</RowIcon>
        <RowText>{children}</RowText>
      </Row>
    </Item>
  );
}

const MODES = [
  { label: "Samochód", Icon: MdDirectionsCar, active: true },
  { label: "Transport publiczny", Icon: MdTrain },
  { label: "Pieszo", Icon: MdDirectionsWalk },
  { label: "Rower", Icon: MdDirectionsBike },
];

function DirectionsScreen() {
  return (
    <Phone aria-label="Wskazówki">
      <StatusBar time="15:46" />
      <RouteHeader>
        <RouteForm onSubmit={(e) => e.preventDefault()}>
          <SideCell $top={3}>
            <PlainButton type="button" aria-label="Wstecz">
              <MdArrowBack size={36} />
            </PlainButton>
          </SideCell>
          <Stops>
            <MdRadioButtonChecked size={22} />
            <Dots>
              <Dot />
              <Dot />
            </Dots>
            <MdPlace size={26} />
          </Stops>
          <Fields>
            <Field type="text" defaultValue="Twoja lokalizacja" aria-label="Punkt początkowy" />
            <Marked $inset="-11px -16px -13px -17px">
              <Field type="text" placeholder="Wybierz punkt docelowy" aria-label="Punkt docelowy" />
            </Marked>
          </Fields>
          <SideCell $top={31}>
            <PlainButton type="button" aria-label="Zamień miejscami">
              <MdSwapVert size={36} />
            </PlainButton>
          </SideCell>
        </RouteForm>
        <Modes>
          {MODES.map(({ label, Icon, active }) => (
            <Mode key={label} $active={active} aria-label={label} aria-pressed={Boolean(active)}>
              <Icon size={28} />
            </Mode>
          ))}
        </Modes>
      </RouteHeader>
      <Results>
        <Card>
          <ResultRow icon={<TrafficIcon />} height={102} dark>
            <Action>
              ZOBACZ NAT<Thin>ĘŻ</Thin>ENIE RUCHU W SWOJEJ OKOLICY
            </Action>
          </ResultRow>
        </Card>
        <Card>
          <ResultRow icon={<ClockIcon />} height={72}>
            <Title>Gruszczyn</Title>
          </ResultRow>
          <ResultRow icon={<ClockIcon />} height={94}>
            <Title>Czarnobyl</Title>
            <Subtitle>Obwód kijowski, Ukraina</Subtitle>
          </ResultRow>
          <ResultRow height={84}>
            <Action $muted>
              WI<Thin>Ę</Thin>CEJ Z HISTORII
            </Action>
          </ResultRow>
        </Card>
        <Card>
          <ResultRow icon={<MdHome size={36} />} height={92}>
            <Title>Dom</Title>
          </ResultRow>
          <ResultRow icon={<BriefcaseIcon />} height={94}>
            <Title>Praca</Title>
          </ResultRow>
        </Card>
        <Card>
          <ResultRow icon={<MdDirectionsCar size={36} />} height={106}>
            <Trip>
              <Duration>34 min</Duration> do Gruszczyn
            </Trip>
          </ResultRow>
        </Card>
      </Results>
      <NavBar />
    </Phone>
  );
}

export default function App() {
  return (
    <>
      <GlobalStyle />
      <Page>
        <MapScreen />
        <DirectionsScreen />
      </Page>
    </>
  );
}
